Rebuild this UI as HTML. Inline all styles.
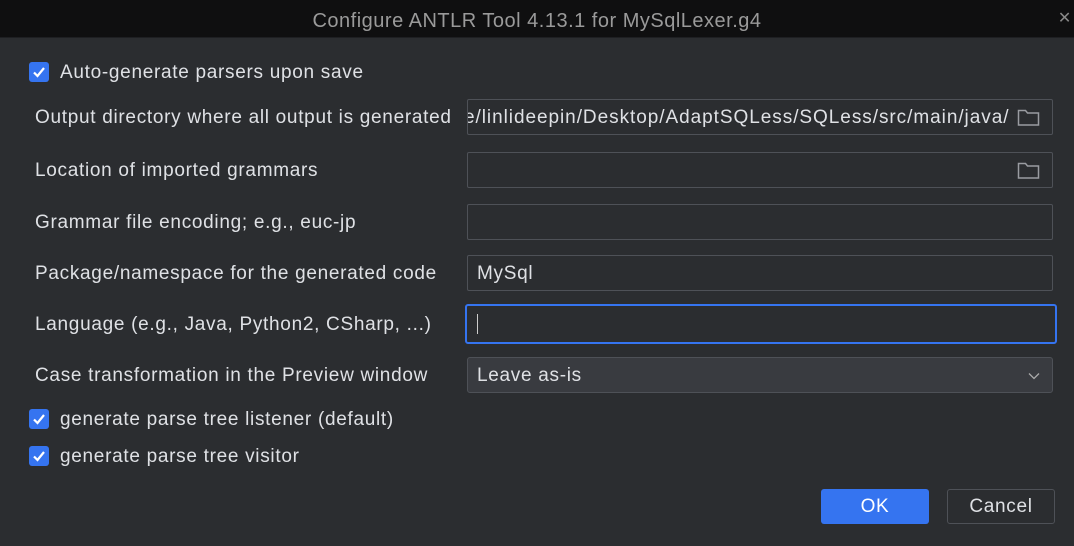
<!DOCTYPE html>
<html><head><style>
body{margin:0;width:1074px;height:546px;background:#2b2d30;font-family:"Liberation Sans","DejaVu Sans",sans-serif;color:#dfe1e5;position:relative;overflow:hidden;font-size:19px;letter-spacing:0.7px}
.t{position:absolute;left:0;top:0;width:1074px;height:37px;background:#0f0f10;border-bottom:1px solid #1e1f22}
.t .tt{position:absolute;left:0;width:1074px;top:10px;text-align:center;color:#9a9a9a;font-size:20px;letter-spacing:0.5px}
.t .x{position:absolute;right:2px;top:8px;color:#888;font-size:16px}
.a{position:absolute;white-space:nowrap}
.cb{position:absolute;left:29px;width:20px;height:20px;background:#3574f0;border-radius:3px}
.cb svg{position:absolute;left:3px;top:3px}
.in{position:absolute;left:467px;width:586px;box-sizing:border-box;border:1px solid #4e5157;border-radius:2px;height:36px;background:#2b2d30;overflow:hidden}
.in .v{position:absolute;left:9px;top:7px;white-space:nowrap}
.fold{position:absolute;right:11px;top:8px}
</style></head><body>
<div class="t"><div class="tt">Configure ANTLR Tool 4.13.1 for MySqlLexer.g4</div><div class="x">✕</div></div>
<div class="cb" style="top:62px"><svg width="14" height="14"><path d="M2 7.5L5.5 11L12 3" stroke="#fff" stroke-width="2.2" fill="none"/></svg></div>
<div class="a" style="left:60px;top:62px">Auto-generate parsers upon save</div>
<div class="a" style="left:35px;top:107px">Output directory where all output is generated</div>
<div class="in" style="top:99px"><div class="v" style="left:-4px;letter-spacing:0.95px">e/linlideepin/Desktop/AdaptSQLess/SQLess/src/main/java/</div><svg class="fold" width="24" height="20"><rect width="24" height="20" fill="#2b2d30"/><path d="M1.5 2.5h7l2 2.5h11v12h-20z" stroke="#9a9ca1" stroke-width="1.5" fill="none"/></svg></div>
<div class="a" style="left:35px;top:160px">Location of imported grammars</div>
<div class="in" style="top:152px"><svg class="fold" width="24" height="20"><path d="M1.5 2.5h7l2 2.5h11v12h-20z" stroke="#9a9ca1" stroke-width="1.5" fill="none"/></svg></div>
<div class="a" style="left:35px;top:212px">Grammar file encoding; e.g., euc-jp</div>
<div class="in" style="top:204px"></div>
<div class="a" style="left:35px;top:263px">Package/namespace for the generated code</div>
<div class="in" style="top:255px"><div class="v">MySql</div></div>
<div class="a" style="left:35px;top:314px">Language (e.g., Java, Python2, CSharp, ...)</div>
<div class="in" style="top:304px;left:465px;width:592px;height:40px;border:2px solid #3574f0;border-radius:3px"><div style="position:absolute;left:10px;top:8px;width:1px;height:20px;background:#ccc"></div></div>
<div class="a" style="left:35px;top:365px">Case transformation in the Preview window</div>
<div class="in" style="top:357px;background:#393b40;border-color:#4e5157;border-radius:3px"><div class="v">Leave as-is</div><svg style="position:absolute;right:12px;top:14px" width="12" height="8"><path d="M1 1.5l5 5l5-5" stroke="#aaa" stroke-width="1.3" fill="none"/></svg></div>
<div class="cb" style="top:409px"><svg width="14" height="14"><path d="M2 7.5L5.5 11L12 3" stroke="#fff" stroke-width="2.2" fill="none"/></svg></div>
<div class="a" style="left:60px;top:409px">generate parse tree listener (default)</div>
<div class="cb" style="top:446px"><svg width="14" height="14"><path d="M2 7.5L5.5 11L12 3" stroke="#fff" stroke-width="2.2" fill="none"/></svg></div>
<div class="a" style="left:60px;top:446px">generate parse tree visitor</div>
<div class="a" style="left:821px;top:489px;width:108px;height:35px;background:#3574f0;border-radius:3px;color:#fff;text-align:center;line-height:36px">OK</div>
<div class="a" style="left:947px;top:489px;width:108px;height:35px;box-sizing:border-box;border:1px solid #4e5157;border-radius:3px;text-align:center;line-height:34px">Cancel</div>
</body></html>
